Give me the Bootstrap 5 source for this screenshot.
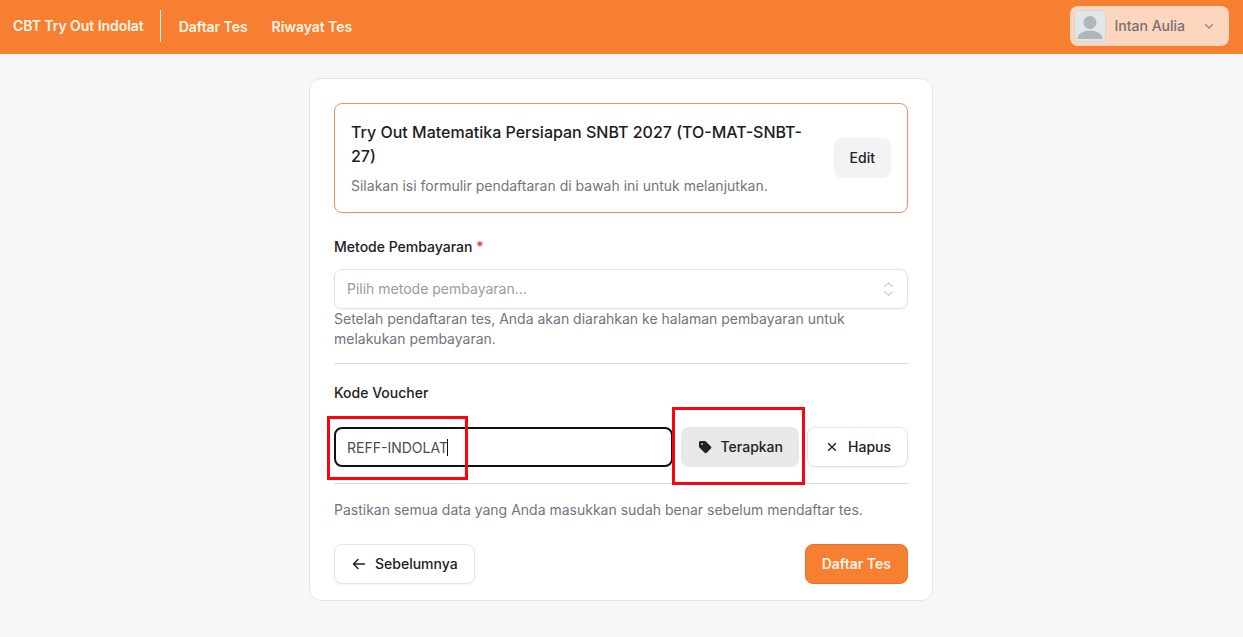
<!DOCTYPE html>
<html lang="id">
<head>
    <meta charset="UTF-8">
    <meta name="viewport" content="width=device-width, initial-scale=1.0">
    <title>CBT Try Out Indolat</title>
    <link href="https://cdn.jsdelivr.net/npm/bootstrap@5.3.0/dist/css/bootstrap.min.css" rel="stylesheet">
    <style>
        body {
            background-color: #f7f7fa;
            color: #1c2024;
            font-family: Inter, "Liberation Sans", sans-serif;
            font-size: 14px;
            line-height: 20px;
        }
        .topbar {
            height: 54px;
            padding: 0 14px 0 13px;
            background-color: #f77f32;
            font-size: 14px;
        }
        .topbar .navbar-brand {
            font-size: 14px;
            font-weight: 600;
            letter-spacing: -.05px;
            padding: 0;
            margin: 0 16px 2px 0;
            color: #fff5e6;
        }
        .topbar .vr {
            align-self: center;
            width: 1px;
            height: 32px;
            margin-bottom: 2px;
            color: #fff;
            opacity: .9;
        }
        .topbar .navbar-nav .nav-link {
            padding: 0;
            color: #fff5e6;
            font-weight: 600;
            letter-spacing: -.05px;
        }
        .topbar .navbar-nav {
            margin-left: 18px;
            gap: 24px;
        }
        .user-menu {
            width: 159px;
            height: 40px;
            margin-bottom: 2px;
            padding: 0 14px 0 4px;
            border: 0;
            border-radius: 8px;
            background-color: #fdd6bf;
            color: #77706e;
            font-size: 14px;
            font-weight: 500;
        }
        .user-menu .avatar {
            margin-right: 8.5px;
        }
        .form-card {
            width: 624px;
            margin: 24px 0 0 calc(50% - 312.5px);
            padding: 24px 24px 16px;
            border: 1px solid #e4e4e8;
            border-radius: 12px;
        }
        .test-info {
            height: 110px;
            margin-bottom: 24px;
            padding: 0 16px;
            border: 1px solid #f58d66;
            border-radius: 8px;
            box-shadow: 0 1px 2px rgba(0, 0, 0, .05);
        }
        .test-info h1 {
            margin: 0 0 8px;
            font-size: 16px;
            font-weight: 500;
            line-height: 24px;
        }
        .hint {
            color: #71757d;
        }
        .form-label {
            font-weight: 500;
        }
        .required {
            color: #ef2b3d;
        }
        .field {
            height: 40px;
            padding: 0 12px;
            border: 1px solid #e1e1e4;
            border-radius: 8px;
            box-shadow: 0 1px 2px rgba(0, 0, 0, .05);
        }
        .select-field {
            padding-right: 11px;
            color: #999ca0;
        }
        .code-field {
            padding: 1px 11px 0;
            border: 2px solid #111;
            box-shadow: none;
            color: #4c4c50;
        }
        .caret {
            width: 1px;
            height: 17px;
            margin-left: -1px;
            background-color: #111;
        }
        .divider {
            height: 1px;
            margin-right: -1px;
            background-color: #dcdcde;
        }
        .voucher-divider {
            margin-top: 14px;
            margin-bottom: 19px;
        }
        .app-btn {
            height: 40px;
            padding: 0 16px;
            border-radius: 8px;
            font-size: 14px;
            font-weight: 500;
            line-height: 20px;
            white-space: nowrap;
            color: #202124;
        }
        .app-btn-soft {
            background-color: #f3f3f4;
            border: 0;
        }
        .app-btn-active {
            background-color: #e8e8e8;
            border: 0;
        }
        .app-btn-outline {
            background-color: #fff;
            border: 1px solid #e4e4e7;
            box-shadow: 0 1px 2px rgba(0, 0, 0, .05);
        }
        .app-btn-primary {
            background-color: #f77f32;
            border: 1px solid #e1722b;
            color: #fff5e6;
            font-weight: 600;
        }
        /* callout frames drawn over the form */
        .callout {
            position: absolute;
            border: 3px solid #fb0410;
            pointer-events: none;
        }
        .callout-code {
            left: -7px;
            top: -11px;
            width: 141px;
            height: 64px;
        }
        .callout-apply {
            left: -9px;
            top: -20px;
            width: 133px;
            height: 78px;
        }
    </style>
</head>
<body>
    <nav class="navbar navbar-expand topbar">
        <a class="navbar-brand" href="#">CBT Try Out Indolat</a>
        <div class="vr"></div>
        <div class="navbar-nav me-auto">
            <a class="nav-link" href="#">Daftar Tes</a>
            <a class="nav-link" href="#">Riwayat Tes</a>
        </div>
        <button type="button" class="user-menu d-flex align-items-center">
            <svg class="avatar" width="32" height="32" viewBox="0 0 32 32">
                <rect x=".5" y=".5" width="31" height="31" rx="3" fill="#e1e6e9" stroke="#d6d5d3"/>
                <circle cx="16" cy="12.5" r="6.5" fill="#b0b6b9"/>
                <path d="M3.300 29c.8-5.500 6-8.500 12.700-8.500s11.900 3 12.700 8.500z" fill="#b0b6b9"/>
            </svg>
            <span>Intan Aulia</span>
            <svg class="ms-auto" width="12" height="12" viewBox="0 0 12 12" fill="none" stroke="#938985" stroke-width="1.3" stroke-linecap="round" stroke-linejoin="round">
                <path d="M2.500 4.500 6 8l3.500-3.500"/>
            </svg>
        </button>
    </nav>

    <main class="form-card bg-white">
        <div class="test-info d-flex align-items-center justify-content-between">
            <div>
                <h1>Try Out Matematika Persiapan SNBT 2027 (TO-MAT-SNBT-<br>27)</h1>
                <div class="hint">Silakan isi formulir pendaftaran di bawah ini untuk melanjutkan.</div>
            </div>
            <button type="button" class="btn app-btn app-btn-soft">Edit</button>
        </div>

        <form>
            <label class="form-label d-block mb-2 pb-1">Metode Pembayaran <span class="required">*</span></label>
            <div class="field select-field d-flex align-items-center justify-content-between">
                <span>Pilih metode pembayaran...</span>
                <svg width="16" height="16" viewBox="0 0 16 16" fill="none" stroke="#c8c8cb" stroke-width="1.1" stroke-linecap="round" stroke-linejoin="round">
                    <path d="m4.500 5.500 4-3.700 4 3.700M4.500 10.700l4 3.700 4-3.700"/>
                </svg>
            </div>
            <div class="hint">Setelah pendaftaran tes, Anda akan diarahkan ke halaman pembayaran untuk<br>melakukan pembayaran.</div>
            <div class="divider voucher-divider"></div>

            <label class="form-label d-block mb-4">Kode Voucher</label>
            <div class="d-flex gap-2">
                <div class="position-relative flex-grow-1">
                    <div class="field code-field d-flex align-items-center">
                        <span>REFF-INDOLAT</span><span class="caret"></span>
                    </div>
                    <div class="callout callout-code"></div>
                </div>
                <div class="position-relative">
                    <button type="button" class="btn app-btn app-btn-active d-flex align-items-center gap-2">
                        <svg width="16" height="16" viewBox="0 0 16 16">
                            <path fill="#202124" fill-rule="evenodd" d="M2 3.500A1.500 1.500 0 0 1 3.500 2h4.200c.5 0 .9.200 1.200.5l5 5c.6.6.6 1.500 0 2.100L9.700 13.800c-.6.6-1.500.6-2.100 0l-5-5A1.800 1.800 0 0 1 2 7.600zM5.100 6a.9.9 0 1 0 0-1.800.9.9 0 0 0 0 1.800z"/>
                        </svg>
                        Terapkan
                    </button>
                    <div class="callout callout-apply"></div>
                </div>
                <button type="button" class="btn app-btn app-btn-outline d-flex align-items-center gap-2">
                    <svg width="16" height="16" viewBox="0 0 16 16" fill="none" stroke="#202124" stroke-width="1.400">
                        <path d="m4.200 4.200 7.600 7.600M11.800 4.200l-7.600 7.600"/>
                    </svg>
                    Hapus
                </button>
            </div>
            <div class="divider mt-3"></div>

            <p class="hint mt-3 mb-4">Pastikan semua data yang Anda masukkan sudah benar sebelum mendaftar tes.</p>
            <div class="d-flex justify-content-between">
                <button type="button" class="btn app-btn app-btn-outline d-flex align-items-center gap-2">
                    <svg width="16" height="16" viewBox="0 0 16 16" fill="none" stroke="#202124" stroke-width="1.500" stroke-linecap="round" stroke-linejoin="round">
                        <path d="M13.500 8h-11M7 3.500 2.500 8 7 12.500"/>
                    </svg>
                    Sebelumnya
                </button>
                <button type="button" class="btn app-btn app-btn-primary">Daftar Tes</button>
            </div>
        </form>
    </main>

    <script src="https://cdn.jsdelivr.net/npm/bootstrap@5.3.0/dist/js/bootstrap.bundle.min.js"></script>
</body>
</html>
